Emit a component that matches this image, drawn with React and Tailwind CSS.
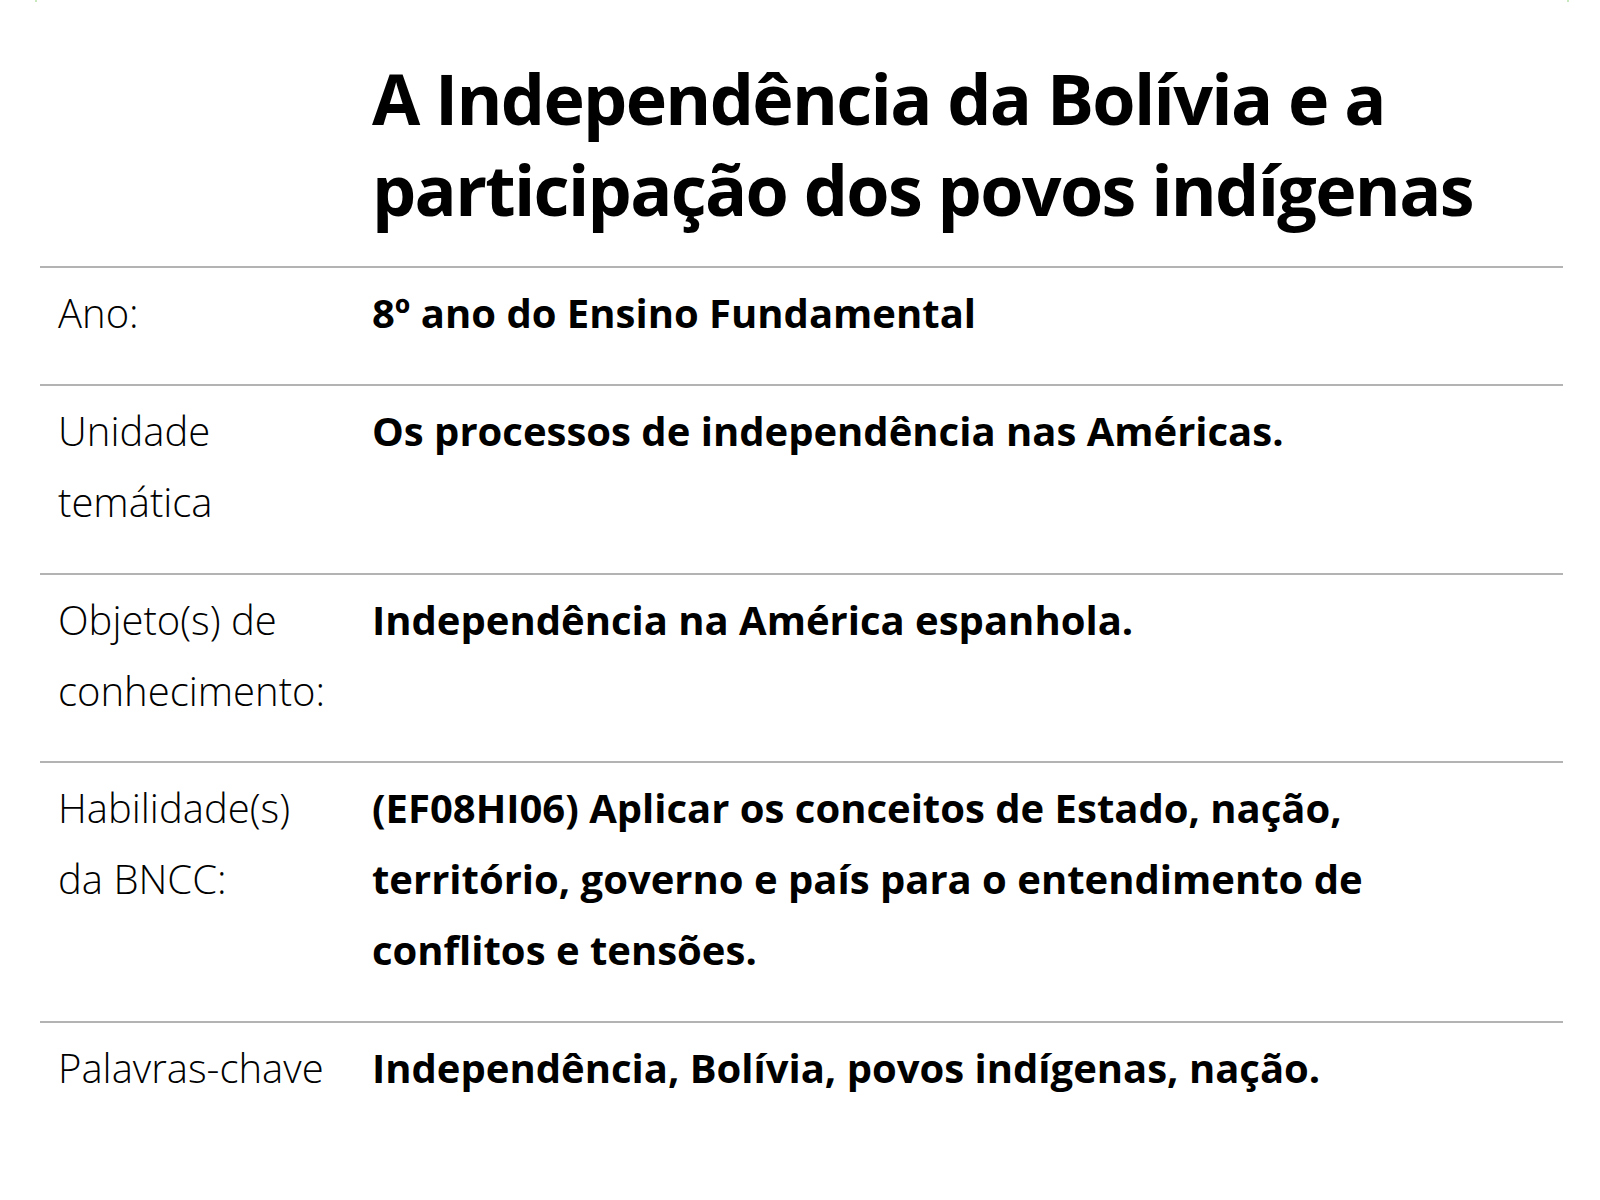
import React from "react";

const rows = [
  { label: "Ano:", value: "8º ano do Ensino Fundamental" },
  { label: "Unidade temática", value: "Os processos de independência nas Américas." },
  { label: "Objeto(s) de conhecimento:", value: "Independência na América espanhola." },
  {
    label: "Habilidade(s) da BNCC:",
    value:
      "(EF08HI06) Aplicar os conceitos de Estado, nação, território, governo e país para o entendimento de conflitos e tensões.",
  },
  { label: "Palavras-chave", value: "Independência, Bolívia, povos indígenas, nação." },
];

export default function App() {
  return (
    <div
      className="relative min-h-[1200px] w-[1600px] bg-white text-black"
      style={{ fontFamily: '"Open Sans", "Noto Sans", sans-serif' }}
    >
      <div className="absolute left-[35px] top-0 h-[2px] w-[2px] rounded-full bg-[#b8e0a8]" />
      <div className="absolute left-[1567px] top-0 h-[2px] w-[2px] rounded-full bg-[#b8e0a8]" />
      <div className="ml-[40px] w-[1523px] pt-[53px]">
        <div className="grid grid-cols-[332px_1fr] pb-[31px]">
          <div />
          <h1 className="text-[70px] font-bold leading-[91px] tracking-[-1.7px]">
            A Independência da Bolívia e a participação dos povos indígenas
          </h1>
        </div>
        {rows.map((r, i) => (
          <div key={r.label}>
            <div className="h-[2px] bg-[#b3b3b3]" />
            <div
              className={
                i === 0
                  ? "grid grid-cols-[332px_1fr] pt-[9px] pb-[36px] text-[40px] leading-[1.78]"
                  : "grid grid-cols-[332px_1fr] pt-[9px] pb-[35px] text-[40px] leading-[1.78]"
              }
            >
              <div className="pl-[18px] pr-[38px] font-light">{r.label}</div>
              <div className="pr-[60px] font-bold">{r.value}</div>
            </div>
          </div>
        ))}
      </div>
    </div>
  );
}
